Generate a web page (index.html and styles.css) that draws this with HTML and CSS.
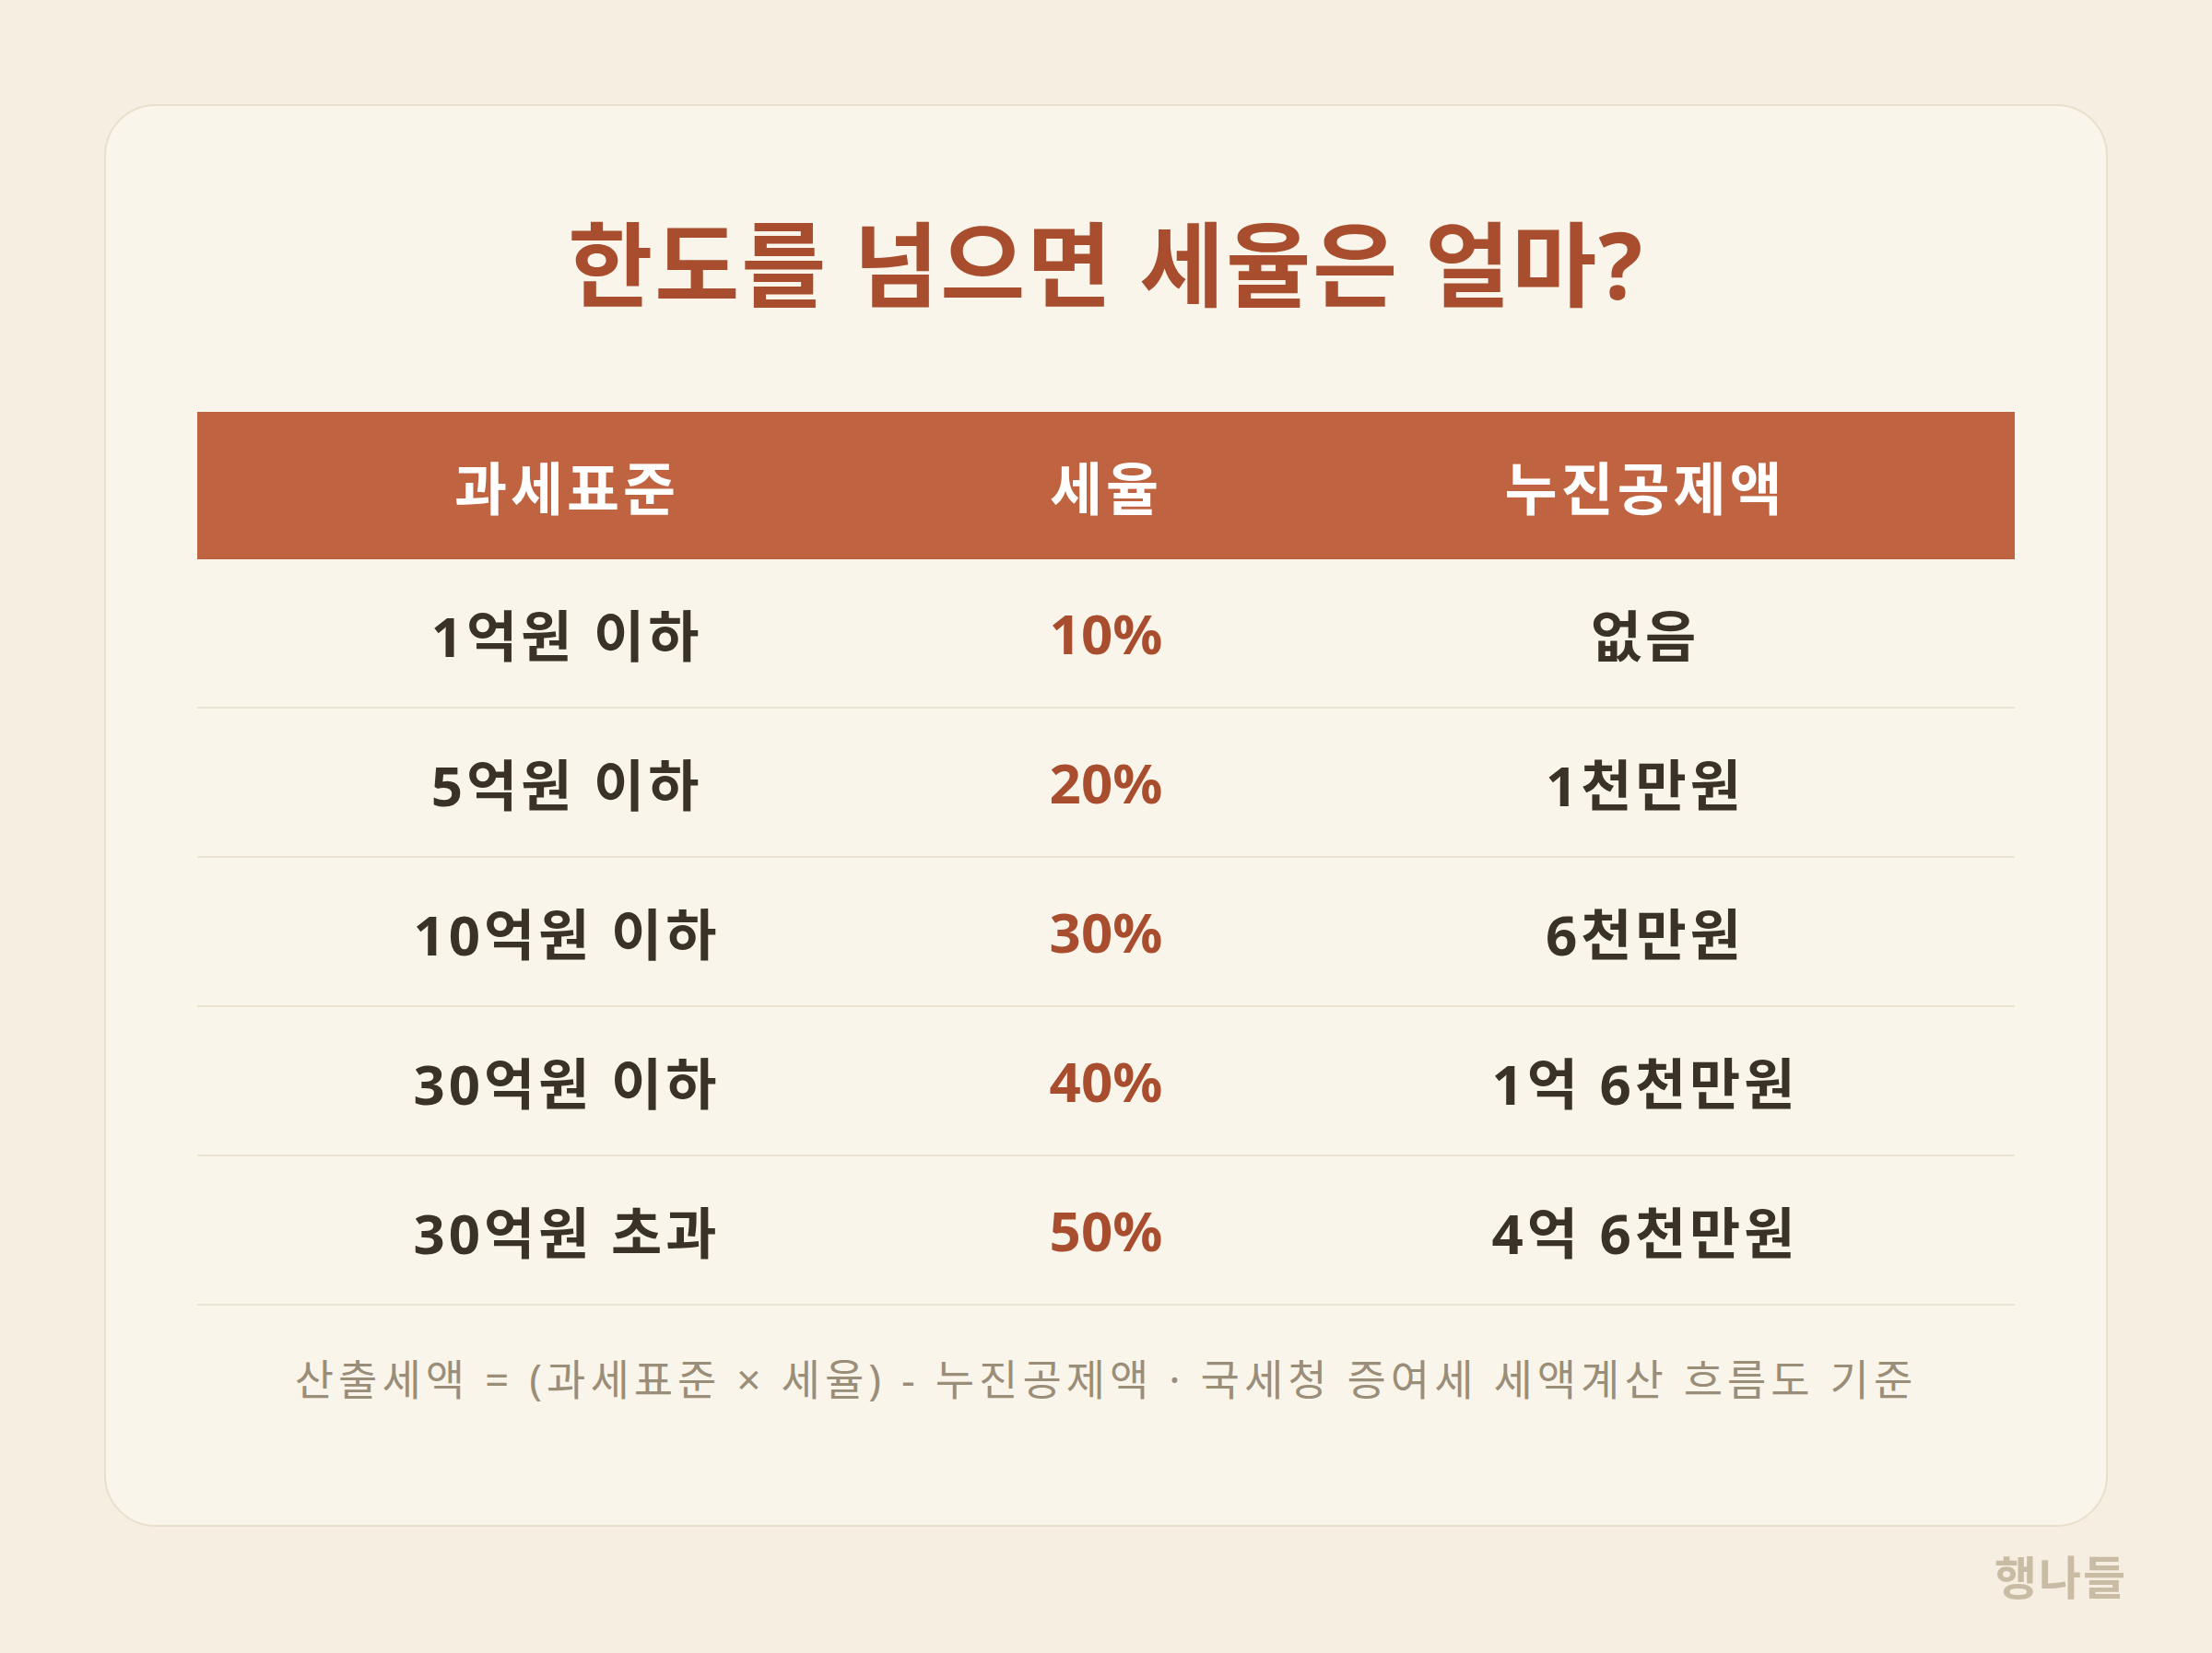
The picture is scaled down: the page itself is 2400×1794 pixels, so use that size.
FILE: index.html
```html
<!DOCTYPE html>
<html lang="ko">
<head>
<meta charset="utf-8">
<title>한도를 넘으면 세율은 얼마?</title>
<link rel="stylesheet" href="styles.css">
</head>
<body>
<main class="page">
  <section class="card">
    <h1 class="title">한도를 넘으면 세율은 얼마?</h1>
    <div class="table">
      <div class="row head">
        <div class="cell">과세표준</div>
        <div class="cell">세율</div>
        <div class="cell">누진공제액</div>
      </div>
      <div class="row">
        <div class="cell">1억원 이하</div>
        <div class="cell rate">10%</div>
        <div class="cell">없음</div>
      </div>
      <div class="row">
        <div class="cell">5억원 이하</div>
        <div class="cell rate">20%</div>
        <div class="cell">1천만원</div>
      </div>
      <div class="row">
        <div class="cell">10억원 이하</div>
        <div class="cell rate">30%</div>
        <div class="cell">6천만원</div>
      </div>
      <div class="row">
        <div class="cell">30억원 이하</div>
        <div class="cell rate">40%</div>
        <div class="cell">1억 6천만원</div>
      </div>
      <div class="row">
        <div class="cell">30억원 초과</div>
        <div class="cell rate">50%</div>
        <div class="cell">4억 6천만원</div>
      </div>
    </div>
    <p class="note">산출세액 = (과세표준 × 세율) - 누진공제액 · 국세청 증여세 세액계산 흐름도 기준</p>
  </section>
  <div class="brand">행나들</div>
</main>
</body>
</html>
```

FILE: styles.css
```css
html, body {
  margin: 0;
  padding: 0;
}
body {
  background: #f5eee1;
  font-family: "Noto Sans", "Noto Sans CJK KR", sans-serif;
  width: 2400px;
  height: 1794px;
  overflow: hidden;
}
.page {
  position: relative;
  box-sizing: border-box;
  width: 2400px;
  height: 1794px;
  padding: 113px 113px 0 113px;
}
.card {
  box-sizing: border-box;
  width: 2174px;
  height: 1544px;
  background: #faf5eb;
  border: 2px solid #e9dfcd;
  border-radius: 56px;
  padding: 110px 99px 0 99px;
}
.title {
  margin: 0 0 100px;
  text-align: center;
  font-size: 100px;
  line-height: 122px;
  font-weight: 700;
  color: #a84e2f;
  letter-spacing: 2px;
}
.table {
  display: flex;
  flex-direction: column;
}
.row {
  display: grid;
  grid-template-columns: 802fr 368fr 802fr;
  height: 162px;
  box-sizing: border-box;
  border-bottom: 2px solid #ece2d2;
  align-items: center;
}
.row.head {
  height: 160px;
  border-bottom: 0;
  background: #c06341;
}
.cell {
  text-align: center;
  font-size: 60px;
  font-weight: 700;
  color: #3a3227;
  letter-spacing: 4px;
}
.head .cell {
  color: #ffffff;
  font-size: 62px;
  letter-spacing: 4px;
}
.cell.rate {
  color: #a84e2f;
  letter-spacing: 0;
}
.note {
  margin: 48px 0 0;
  text-align: center;
  font-size: 46px;
  line-height: 62px;
  color: #9a8e79;
  letter-spacing: 5px;
}
.brand {
  position: absolute;
  right: 92px;
  top: 1673px;
  font-size: 50px;
  font-weight: 700;
  color: #c8bca4;
  letter-spacing: 2px;
}
```
